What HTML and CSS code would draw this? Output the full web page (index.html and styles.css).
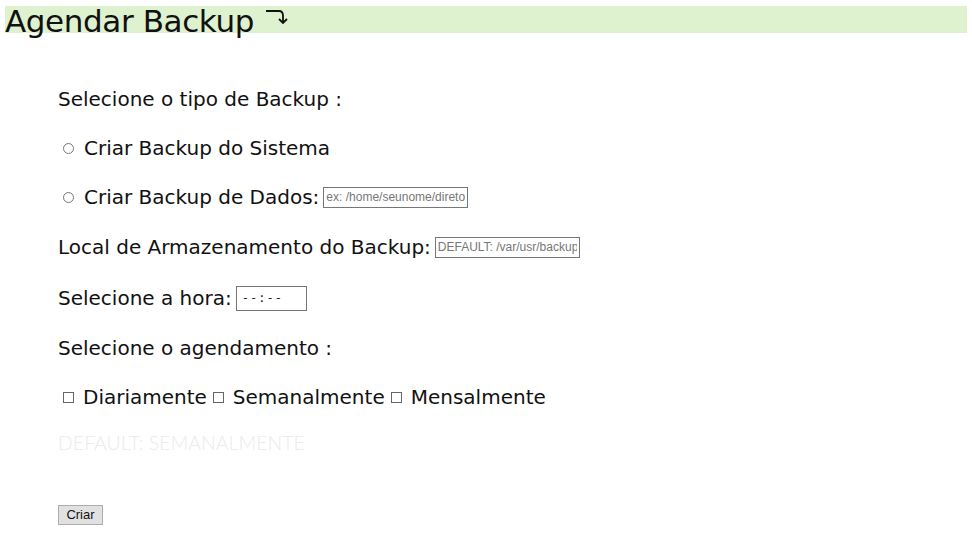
FILE: index.html
```html
<!DOCTYPE html>
<html lang="pt">
<head>
<meta charset="utf-8">
<title>Agendar Backup</title>
<link rel="stylesheet" href="styles.css">
</head>
<body>
<h1 class="title">Agendar Backup<svg class="arrow" width="24" height="18" viewBox="0 0 24 18" aria-hidden="true"><path d="M1 3 H14 Q18 3 18 8 V15" fill="none" stroke="#111" stroke-width="1.8"/><path d="M14 11 L18 15 L22 11" fill="none" stroke="#111" stroke-width="1.8"/></svg></h1>
<form class="form">
  <div class="row">Selecione o tipo de Backup :</div>
  <div class="row"><span class="radio"></span>Criar Backup do Sistema</div>
  <div class="row"><span class="radio"></span>Criar Backup de Dados:<input class="field" type="text" placeholder="ex: /home/seunome/diretorio"></div>
  <div class="row tall">Local de Armazenamento do Backup:<input class="field" type="text" placeholder="DEFAULT: /var/usr/backup"></div>
  <div class="row tall">Selecione a hora:<span class="time">--:--</span></div>
  <div class="row">Selecione o agendamento :</div>
  <div class="row"><span class="check first"></span>Diariamente<span class="check"></span>Semanalmente<span class="check"></span>Mensalmente</div>
  <div class="row note">DEFAULT: SEMANALMENTE</div>
  <div class="actions"><button class="btn" type="button">Criar</button></div>
</form>
</body>
</html>
```
FILE: styles.css
```css
html, body {
  margin: 0;
  padding: 0;
  background: #fff;
}
body {
  font-family: "DejaVu Sans", sans-serif;
  color: #111;
}
.title {
  margin: 6px 5px 0;
  height: 27px;
  background: #dff2d0;
  font-weight: normal;
  font-size: 31px;
  line-height: 31px;
  letter-spacing: -0.4px;
  white-space: nowrap;
  display: flex;
  align-items: flex-start;
}
.arrow {
  margin: 2px 0 0 11px;
}
.form {
  padding: 54px 0 0 58px;
  display: flex;
  flex-direction: column;
}
.row {
  height: 24px;
  margin-bottom: 25px;
  display: flex;
  align-items: center;
  font-size: 20px;
  white-space: nowrap;
}
.row.tall {
  height: 26px;
}
.radio {
  width: 11px;
  height: 11px;
  border: 1px solid #777;
  border-radius: 50%;
  box-sizing: border-box;
  margin: 0 10px 0 5px;
}
.check {
  width: 11px;
  height: 11px;
  border: 1px solid #666;
  box-sizing: border-box;
  margin: 0 9px 0 6px;
}
.check.first {
  margin-left: 5px;
}
.field {
  margin-left: 4px;
  width: 145px;
  height: 21px;
  box-sizing: border-box;
  border: 1px solid #767676;
  padding: 1px 2px;
  font-family: "Liberation Sans", Arial, sans-serif;
  font-size: 12px;
  color: #222;
  background: #fff;
}
.field::placeholder {
  color: #777;
}
.time {
  margin-left: 4px;
  width: 71px;
  height: 25px;
  box-sizing: border-box;
  border: 1px solid #767676;
  padding: 3px 5px;
  font-family: "DejaVu Sans Mono", monospace;
  font-size: 12px;
  line-height: 17px;
  letter-spacing: 1px;
  color: #222;
}
.note {
  margin-top: -4px;
  color: #ebebeb;
  font-family: "Lato", sans-serif;
  font-weight: 300;
  font-size: 19.5px;
}
.actions {
  margin-top: 25px;
}
.btn {
  width: 45px;
  height: 20px;
  padding: 0;
  border: 1px solid #adadad;
  background: #e1e1e1;
  font-family: "Liberation Sans", Arial, sans-serif;
  font-size: 13px;
  color: #111;
}
```
